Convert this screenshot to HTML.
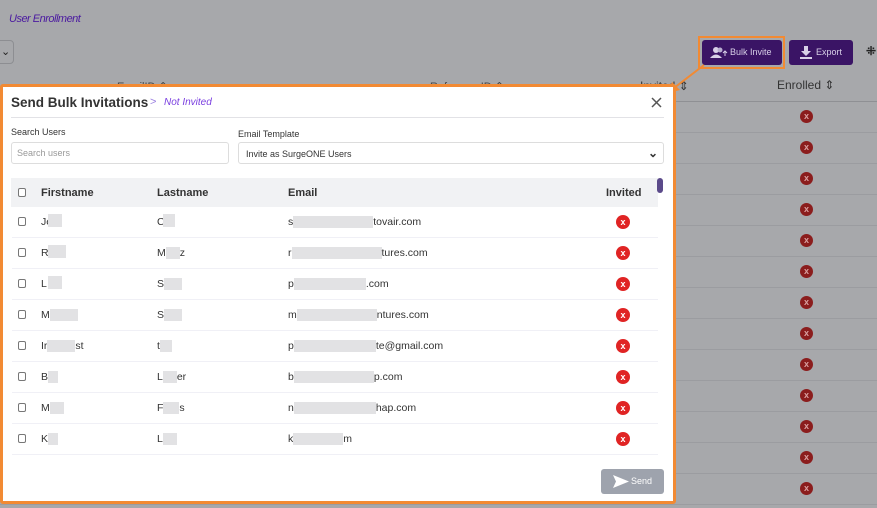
<!DOCTYPE html>
<html><head><style>
*{box-sizing:border-box;margin:0;padding:0}
body{width:877px;height:508px;overflow:hidden;background:#a7a8ab;font-family:"Liberation Sans",sans-serif;position:relative;color:#222}
.a{position:absolute}
.bgline{position:absolute;left:0;width:877px;height:1px;background:#9b9ca0}
.xi{position:absolute;width:13px;height:13px;border-radius:50%;background:#8b1d1d;color:#d9a0a0;font-size:9px;font-weight:bold;text-align:center;line-height:13px}
.xr{position:absolute;width:14px;height:14px;border-radius:50%;background:#e02424;color:#fff;font-size:9px;font-weight:bold;text-align:center;line-height:14px}
.cb{position:absolute;width:8px;height:9px;border:1px solid #777;border-radius:2px;background:#fff}
.t{position:absolute;font-size:10.5px;color:#333}
.t span{background:#e2e2e4 !important}
.bl{position:absolute;background:#e2e2e4;height:13px}
.rl{position:absolute;left:12px;width:646px;height:1px;background:#f0f0f6}
</style></head><body>
<div class="a" style="left:9px;top:13px;font-size:11px;font-style:italic;color:#4b1aa0;letter-spacing:-0.5px">User Enrollment</div>
<div class="a" style="left:-6px;top:40px;width:20px;height:24px;border:1px solid #8d8e92;border-radius:4px;font-size:11px;line-height:22px;padding-left:6px">&#8964;</div>
<div class="a" style="left:117px;top:80px;font-size:11px;color:#444">EmailID ⇕</div>
<div class="a" style="left:430px;top:80px;font-size:11px;color:#444">ReferenceID ⇕</div>
<div class="a" style="left:640px;top:79px;font-size:12px;color:#333">Invited ⇕</div>
<div class="a" style="left:777px;top:78px;font-size:12px;color:#333">Enrolled ⇕</div>
<div class="bgline" style="top:101px;background:#8f9094"></div>
<div class="bgline" style="top:132px"></div><div class="bgline" style="top:163px"></div><div class="bgline" style="top:194px"></div><div class="bgline" style="top:225px"></div><div class="bgline" style="top:256px"></div><div class="bgline" style="top:287px"></div><div class="bgline" style="top:318px"></div><div class="bgline" style="top:349px"></div><div class="bgline" style="top:380px"></div><div class="bgline" style="top:411px"></div><div class="bgline" style="top:442px"></div><div class="bgline" style="top:473px"></div><div class="bgline" style="top:504px"></div>
<div class="xi" style="left:800px;top:110px">x</div><div class="xi" style="left:800px;top:141px">x</div><div class="xi" style="left:800px;top:172px">x</div><div class="xi" style="left:800px;top:203px">x</div><div class="xi" style="left:800px;top:234px">x</div><div class="xi" style="left:800px;top:265px">x</div><div class="xi" style="left:800px;top:296px">x</div><div class="xi" style="left:800px;top:327px">x</div><div class="xi" style="left:800px;top:358px">x</div><div class="xi" style="left:800px;top:389px">x</div><div class="xi" style="left:800px;top:420px">x</div><div class="xi" style="left:800px;top:451px">x</div><div class="xi" style="left:800px;top:482px">x</div>
<div class="a" style="left:698px;top:36px;width:87px;height:33px;border:2px solid #f28a33"></div>
<div class="a" style="left:702px;top:40px;width:80px;height:25px;background:#3a1465;border-radius:3px;color:#d8d0e8;font-size:9px;line-height:25px;padding-left:28px">Bulk Invite
<svg style="position:absolute;left:8px;top:6px" width="18" height="13"><circle cx="6" cy="4" r="3" fill="#d8d0e8"/><path d="M0 12 Q6 5 12 12Z" fill="#d8d0e8"/><circle cx="10" cy="4" r="2.5" fill="#b8aed0"/><path d="M15 5v5M13 7l2-2 2 2" stroke="#d8d0e8" fill="none"/></svg></div>
<div class="a" style="left:789px;top:40px;width:64px;height:25px;background:#3a1465;border-radius:3px;color:#d8d0e8;font-size:9px;line-height:25px;padding-left:27px">Export
<svg style="position:absolute;left:11px;top:6px" width="12" height="13"><path d="M4 0h4v5h3l-5 5-5-5h3z" fill="#d8d0e8"/><rect x="0" y="11" width="12" height="2" fill="#d8d0e8"/></svg></div>
<div class="a" style="left:866px;top:44px;font-size:12px;color:#222;font-weight:bold">⁜</div>
<svg class="a" style="left:660px;top:60px" width="50" height="40"><line x1="44" y1="5" x2="14" y2="28" stroke="#f28a33" stroke-width="2"/><polygon points="8,33 12,22 20,30" fill="#f28a33"/></svg>
<div class="a" style="left:0;top:84px;width:676px;height:420px;background:#fff;border:3px solid #f28a33;border-radius:3px"></div>
<div class="a" style="left:11px;top:95px;font-size:13.5px;font-weight:bold;color:#333">Send Bulk Invitations</div>
<div class="a" style="left:150px;top:96px;font-size:11px;color:#9a7ee0">&gt;</div>
<div class="a" style="left:164px;top:97px;font-size:10px;font-style:italic;color:#7a3fe0">Not Invited</div>
<svg class="a" style="left:651px;top:97px" width="11" height="11"><path d="M1 1L10 10M10 1L1 10" stroke="#555" stroke-width="1.5"/></svg>
<div class="a" style="left:11px;top:117px;width:653px;height:1px;background:#e2e2e6"></div>
<div class="a" style="left:11px;top:127px;font-size:9px;color:#333">Search Users</div>
<div class="a" style="left:238px;top:129px;font-size:9px;color:#333">Email Template</div>
<div class="a" style="left:11px;top:142px;width:218px;height:22px;border:1px solid #ddd;border-radius:3px;font-size:9px;color:#999;padding:5px 5px">Search users</div>
<div class="a" style="left:238px;top:142px;width:426px;height:22px;border:1px solid #ddd;border-radius:3px;font-size:9px;color:#333;padding:6px 7px">Invite as SurgeONE Users<span style="position:absolute;right:5px;top:3px;font-size:12px;font-weight:bold">&#8964;</span></div>
<div class="a" style="left:11px;top:178px;width:647px;height:29px;background:#f1f2f4"></div>
<div class="a" style="left:657px;top:178px;width:6px;height:15px;background:#5b4a8a;border-radius:3px"></div>
<div class="cb" style="left:18px;top:188px"></div>
<div class="t" style="left:41px;top:187px;font-weight:bold;font-size:11px">Firstname</div>
<div class="t" style="left:157px;top:187px;font-weight:bold;font-size:11px">Lastname</div>
<div class="t" style="left:288px;top:187px;font-weight:bold;font-size:11px">Email</div>
<div class="t" style="left:606px;top:187px;font-weight:bold;font-size:11px">Invited</div>

<div class="cb" style="left:18px;top:217px"></div><div class="t" style="left:41px;top:216px">Je</div><div class="bl" style="left:48px;top:214px;width:14px"></div><div class="t" style="left:157px;top:216px">C</div><div class="bl" style="left:163px;top:214px;width:12px"></div><div class="t" style="left:288px;top:216px">s<span style="display:inline-block;width:80px;height:12px;vertical-align:middle"></span>tovair.com</div><div class="xr" style="left:616px;top:215px">x</div><div class="rl" style="top:237px"></div>
<div class="cb" style="left:18px;top:248px"></div><div class="t" style="left:41px;top:247px">R</div><div class="bl" style="left:48px;top:245px;width:18px"></div><div class="t" style="left:157px;top:247px">M<span style="display:inline-block;width:14px;height:12px;vertical-align:middle"></span>z</div><div class="t" style="left:288px;top:247px">r<span style="display:inline-block;width:90px;height:12px;vertical-align:middle"></span>tures.com</div><div class="xr" style="left:616px;top:246px">x</div><div class="rl" style="top:268px"></div>
<div class="cb" style="left:18px;top:279px"></div><div class="t" style="left:41px;top:278px">L</div><div class="bl" style="left:48px;top:276px;width:14px"></div><div class="t" style="left:157px;top:278px">S<span style="display:inline-block;width:18px;height:12px;vertical-align:middle"></span></div><div class="t" style="left:288px;top:278px">p<span style="display:inline-block;width:72px;height:12px;vertical-align:middle"></span>.com</div><div class="xr" style="left:616px;top:277px">x</div><div class="rl" style="top:299px"></div>
<div class="cb" style="left:18px;top:310px"></div><div class="t" style="left:41px;top:309px">M<span style="display:inline-block;width:28px;height:12px;vertical-align:middle"></span></div><div class="t" style="left:157px;top:309px">S<span style="display:inline-block;width:18px;height:12px;vertical-align:middle"></span></div><div class="t" style="left:288px;top:309px">m<span style="display:inline-block;width:80px;height:12px;vertical-align:middle"></span>ntures.com</div><div class="xr" style="left:616px;top:308px">x</div><div class="rl" style="top:330px"></div>
<div class="cb" style="left:18px;top:341px"></div><div class="t" style="left:41px;top:340px">Ir<span style="display:inline-block;width:28px;height:12px;vertical-align:middle"></span>st</div><div class="t" style="left:157px;top:340px">t<span style="display:inline-block;width:12px;height:12px;vertical-align:middle"></span></div><div class="t" style="left:288px;top:340px">p<span style="display:inline-block;width:82px;height:12px;vertical-align:middle"></span>te@gmail.com</div><div class="xr" style="left:616px;top:339px">x</div><div class="rl" style="top:361px"></div>
<div class="cb" style="left:18px;top:372px"></div><div class="t" style="left:41px;top:371px">B<span style="display:inline-block;width:10px;height:12px;vertical-align:middle"></span></div><div class="t" style="left:157px;top:371px">L<span style="display:inline-block;width:14px;height:12px;vertical-align:middle"></span>er</div><div class="t" style="left:288px;top:371px">b<span style="display:inline-block;width:80px;height:12px;vertical-align:middle"></span>p.com</div><div class="xr" style="left:616px;top:370px">x</div><div class="rl" style="top:392px"></div>
<div class="cb" style="left:18px;top:403px"></div><div class="t" style="left:41px;top:402px">M<span style="display:inline-block;width:14px;height:12px;vertical-align:middle"></span></div><div class="t" style="left:157px;top:402px">F<span style="display:inline-block;width:16px;height:12px;vertical-align:middle"></span>s</div><div class="t" style="left:288px;top:402px">n<span style="display:inline-block;width:82px;height:12px;vertical-align:middle"></span>hap.com</div><div class="xr" style="left:616px;top:401px">x</div><div class="rl" style="top:423px"></div>
<div class="cb" style="left:18px;top:434px"></div><div class="t" style="left:41px;top:433px">K<span style="display:inline-block;width:10px;height:12px;vertical-align:middle"></span></div><div class="t" style="left:157px;top:433px">L<span style="display:inline-block;width:14px;height:12px;vertical-align:middle"></span></div><div class="t" style="left:288px;top:433px">k<span style="display:inline-block;width:50px;height:12px;vertical-align:middle"></span>m</div><div class="xr" style="left:616px;top:432px">x</div><div class="rl" style="top:454px"></div>
<div class="a" style="left:601px;top:469px;width:63px;height:25px;background:#9ea3ad;border-radius:3px;color:#fff;font-size:9px;line-height:25px;padding-left:30px">Send
<svg style="position:absolute;left:12px;top:6px" width="16" height="13"><path d="M0 0L16 6.5L0 13L3 6.5Z" fill="#fff"/></svg></div>
</body></html>
